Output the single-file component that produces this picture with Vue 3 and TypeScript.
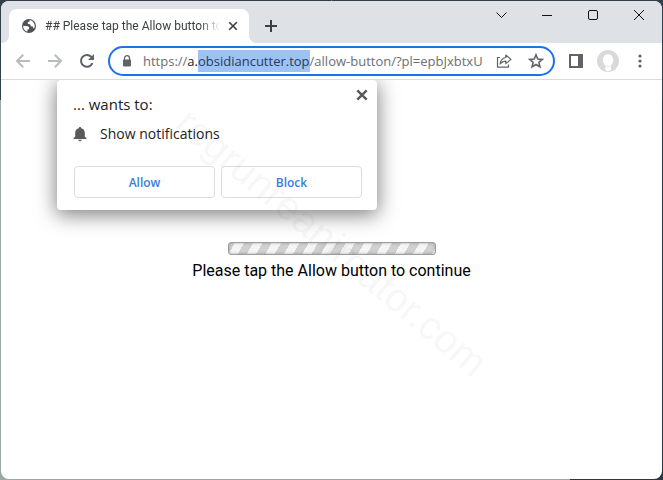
<script setup lang="ts">
import { ref } from 'vue'

const tabTitle = '## Please tap the Allow button to continue'
const url = ref('https://a.obsidiancutter.top/allow-button/?pl=epbJxbtxU')
const urlParts = [
  { text: 'https://', kind: 'muted' },
  { text: 'a.', kind: 'host' },
  { text: 'obsidiancutter.top', kind: 'selected' },
  { text: '/allow-button/?pl=epbJxbtxU', kind: 'muted' },
]
const promptOpen = ref(true)
</script>

<template>
  <div class="desktop">
    <div class="window">
      <header class="titlebar">
        <div class="tab">
          <svg class="globe" viewBox="0 0 16 16" aria-hidden="true">
            <circle cx="8" cy="8" r="7" fill="#4f5357" />
            <path d="M2.2 7.8 7 8.2 8.3 9.7 7.9 11.3 6.5 11.5 6.3 13.8A6 6 0 0 1 2.2 7.8Z" fill="#fff" />
            <path d="M8.8 2.1 8.5 3.6 6.7 4.3 7 5.9 9.2 6.2 9.8 8.3 12 8.5 12.2 10.2 13.2 10.3A5.9 5.9 0 0 0 8.8 2.1Z" fill="#fff" />
          </svg>
          <span class="tab-title">{{ tabTitle }}</span>
          <button class="tab-close" type="button" aria-label="Close tab">
            <svg viewBox="0 0 10 10" aria-hidden="true"><path d="M1.2 1.2 8.8 8.8M8.8 1.2 1.2 8.8" /></svg>
          </button>
        </div>
        <button class="new-tab" type="button" aria-label="New tab">
          <svg viewBox="0 0 12 12" aria-hidden="true"><path d="M6 0V12M0 6H12" /></svg>
        </button>
        <div class="window-controls">
          <button type="button" aria-label="Search tabs">
            <svg viewBox="0 0 12 12" aria-hidden="true"><path d="M1.5 3.5 6.5 8.5 11.5 3.5" /></svg>
          </button>
          <button type="button" aria-label="Minimize">
            <svg viewBox="0 0 12 12" aria-hidden="true"><path d="M1 6.5H11" /></svg>
          </button>
          <button type="button" aria-label="Maximize">
            <svg viewBox="0 0 12 12" aria-hidden="true"><rect x="1.5" y="1.5" width="9" height="9" rx="1.5" /></svg>
          </button>
          <button type="button" aria-label="Close window">
            <svg viewBox="0 0 12 12" aria-hidden="true"><path d="M1 1 11 11M11 1 1 11" /></svg>
          </button>
        </div>
      </header>

      <nav class="toolbar" aria-label="Browser toolbar">
        <button class="tool dim" type="button" aria-label="Back">
          <svg viewBox="0 0 16 16" aria-hidden="true"><path d="M15 8H2M8.2 1.8 2 8 8.2 14.2" /></svg>
        </button>
        <button class="tool dim" type="button" aria-label="Forward">
          <svg viewBox="0 0 16 16" aria-hidden="true"><path d="M1 8H14M7.8 1.8 14 8 7.8 14.2" /></svg>
        </button>
        <button class="tool" type="button" aria-label="Reload">
          <svg viewBox="0 0 16 16" aria-hidden="true">
            <path d="M13.4 10.1A5.9 5.9 0 1 1 12.2 3.8L13.6 5.2" />
            <path class="solid" d="M15 1V7H9Z" />
          </svg>
        </button>
        <div class="address">
          <svg class="lock" viewBox="0 0 10 12" aria-hidden="true">
            <path d="M2.5 5V3.2a2.5 2.5 0 0 1 5 0V5" fill="none" stroke="#5f6368" stroke-width="1.3" />
            <rect x="1" y="4.5" width="8" height="7" rx="1" fill="#5f6368" />
          </svg>
          <div class="url">
            <div class="url-text" aria-hidden="true">
              <span v-for="part in urlParts" :key="part.text" :class="part.kind">{{ part.text }}</span>
            </div>
            <input v-model="url" class="url-input" type="text" aria-label="Address" spellcheck="false" />
          </div>
          <button class="in-address" type="button" aria-label="Share this page">
            <svg viewBox="0 0 16 16" aria-hidden="true">
              <path d="M4 4.5H1.5V14.2H12.5V11.5" />
              <path d="M9.8 2 15 6.4 9.8 10.6V8.2C7.3 8.1 5.5 9 4 11 4.5 7.7 6.4 5.1 9.8 4.5Z" stroke-linejoin="round" />
            </svg>
          </button>
          <button class="in-address" type="button" aria-label="Bookmark this tab">
            <svg viewBox="0 0 16 16" aria-hidden="true">
              <path class="star" d="M8 1.8 9.8 6 14.3 6.4 10.9 9.4 11.9 13.8 8 11.5 4.1 13.8 5.1 9.4 1.7 6.4 6.2 6Z" />
            </svg>
          </button>
        </div>
        <button class="tool" type="button" aria-label="Side panel">
          <svg viewBox="0 0 16 16" aria-hidden="true">
            <path class="solid" fill-rule="evenodd" d="M1 1H15V15H1ZM3 3V13H10V3Z" />
          </svg>
        </button>
        <button class="profile" type="button" aria-label="Profile">
          <svg viewBox="0 0 22 22" aria-hidden="true">
            <circle cx="11" cy="11" r="11" fill="#d9d9d9" />
            <path d="M11 4.2C7.6 4.2 5.7 6.8 5.9 10 6 12.7 7.2 14.6 8.8 16L8 19.5 11 21.5 14.5 19.5 13.6 16C15.5 14.4 16.3 12.4 16.2 9.6 16.1 6.3 14.1 4.2 11 4.2Z" fill="#fff" />
            <path d="M9.4 16.2Q11.2 17.8 13 16.2" fill="none" stroke="#e3e3e3" />
          </svg>
        </button>
        <button class="tool" type="button" aria-label="Menu">
          <svg viewBox="0 0 16 16" aria-hidden="true">
            <circle class="solid" cx="8" cy="3" r="1.6" /><circle class="solid" cx="8" cy="8" r="1.6" /><circle class="solid" cx="8" cy="13" r="1.6" />
          </svg>
        </button>
      </nav>

      <main class="page">
        <section v-if="promptOpen" class="prompt" role="dialog" aria-labelledby="prompt-title">
          <div class="prompt-head">
            <h1 id="prompt-title">... wants to:</h1>
            <button class="prompt-close" type="button" aria-label="Dismiss" @click="promptOpen = false">
              <svg viewBox="0 0 12 12" aria-hidden="true"><path d="M1.3 1.3 10.7 10.7M10.7 1.3 1.3 10.7" /></svg>
            </button>
          </div>
          <p class="permission">
            <svg viewBox="0 0 14 16" aria-hidden="true">
              <path d="M7 1C7.8 1 8.1 1.5 8.1 2.2 10.4 2.7 11.8 4.5 11.8 6.7V10.6L13.5 12.2V13H.5V12.2L2.2 10.6V6.7C2.2 4.5 3.6 2.7 5.9 2.2 5.9 1.5 6.2 1 7 1ZM5.4 13.7H8.6A1.6 1.6 0 0 1 5.4 13.7Z" fill="#5a5a5a" />
            </svg>
            <span>Show notifications</span>
          </p>
          <div class="actions">
            <button type="button">Allow</button>
            <button type="button">Block</button>
          </div>
        </section>

        <div class="waiting">
          <div class="progress" role="progressbar" aria-label="Loading"></div>
          <p>Please tap the Allow button to continue</p>
        </div>
      </main>
      <div class="watermark">regrunreanimator.com</div>
    </div>
  </div>
</template>

<style>
body {
  margin: 0;
}
</style>

<style scoped>
* {
  box-sizing: border-box;
}
.desktop {
  min-height: 100vh;
  padding: 1px;
  display: flex;
  background:
    linear-gradient(#303f48, #303f48) 0 0 / 50% 100px no-repeat,
    linear-gradient(#303f48, #303f48) 100% 0 / 50% 100px no-repeat,
    linear-gradient(to right, #9aa8a7 0 86%, #273940 86%);
  font-family: "Open Sans", "Noto Sans", sans-serif;
}
.window {
  flex: 1;
  min-width: 0;
  display: flex;
  flex-direction: column;
  position: relative;
  overflow: hidden;
  border-radius: 8px;
  background: #fff;
}
button {
  border: 0;
  padding: 0;
  background: none;
  display: flex;
  align-items: center;
  justify-content: center;
  font-family: inherit;
}
svg {
  display: block;
  flex: none;
}
.titlebar {
  height: 42px;
  display: flex;
  background: #dee1e6;
}
.tab {
  position: relative;
  width: 240px;
  height: 34px;
  margin: 8px 0 0 8px;
  padding: 0 11px 0 12px;
  display: flex;
  align-items: center;
  gap: 8px;
  border-radius: 8px 8px 0 0;
  background: #fff;
}
.tab::before,
.tab::after {
  content: "";
  position: absolute;
  bottom: 0;
  width: 8px;
  height: 8px;
}
.tab::before {
  right: 100%;
  background: radial-gradient(circle at 0 0, transparent 8px, #fff 8px);
}
.tab::after {
  left: 100%;
  background: radial-gradient(circle at 100% 0, transparent 8px, #fff 8px);
}
.globe {
  width: 16px;
  height: 16px;
}
.tab-title {
  flex: 1;
  min-width: 0;
  overflow: hidden;
  white-space: nowrap;
  font-family: Roboto, sans-serif;
  font-size: 12px;
  line-height: 16px;
  color: #3c4043;
  mask-image: linear-gradient(to left, transparent, #000 20px);
}
.tab-close svg {
  width: 10px;
  height: 10px;
  fill: none;
  stroke: #3c4043;
  stroke-width: 1.6;
}
.new-tab {
  width: 28px;
  margin: 8px 0 0 8px;
}
.new-tab svg {
  width: 12px;
  height: 12px;
  stroke: #3c4043;
  stroke-width: 2;
}
.window-controls {
  margin-left: auto;
  height: 28px;
  display: flex;
}
.window-controls button {
  width: 46px;
}
.window-controls svg {
  width: 12px;
  height: 12px;
  fill: none;
  stroke: #111;
  stroke-width: 1;
}
.toolbar {
  height: 37px;
  padding: 0 14px;
  display: flex;
  align-items: center;
  gap: 16px;
  border-bottom: 1px solid #d9dbde;
}
.tool svg,
.in-address svg {
  width: 16px;
  height: 16px;
  fill: none;
  stroke: #5f6368;
  stroke-width: 2;
}
.dim svg {
  stroke: #b9bbbe;
}
.tool .solid {
  fill: #5f6368;
  stroke: none;
}
.address {
  flex: 1;
  min-width: 0;
  height: 30px;
  margin: 0 -3px;
  padding: 0 9px 0 12px;
  display: flex;
  align-items: center;
  gap: 16px;
  border: 2px solid #1a73e8;
  border-radius: 15px;
}
.lock {
  width: 10px;
  height: 12px;
  margin-right: -5px;
}
.url {
  flex: 1;
  min-width: 0;
  margin-right: -6px;
  display: grid;
  overflow: hidden;
  font-size: 13px;
  line-height: 22px;
}
.url-text,
.url-input {
  grid-area: 1 / 1;
  min-width: 0;
  width: 100%;
}
.url-text {
  overflow: hidden;
  white-space: nowrap;
}
.url-input {
  border: 0;
  padding: 0;
  outline: 0;
  background: none;
  font: inherit;
  color: transparent;
}
.muted {
  color: #6b6f74;
}
.host {
  color: #202124;
}
.selected {
  display: inline-block;
  background: #9dc2f5;
  color: #2b3c55;
}
.in-address svg {
  stroke-width: 1.2;
}
.in-address .star {
  stroke-width: 1.6;
}
.profile {
  margin: 0 -3px;
}
.profile svg {
  width: 22px;
  height: 22px;
}
.page {
  flex: 1;
  display: flex;
  flex-direction: column;
}
.prompt {
  width: 320px;
  margin-left: 56px;
  padding: 9px 15px 12px 16px;
  border-radius: 4px;
  background: #fff;
  box-shadow: 0 4px 20px 1px rgba(0, 0, 0, 0.5);
  clip-path: inset(0 -40px -40px -40px);
}
.prompt-head {
  display: flex;
  justify-content: space-between;
}
.prompt h1 {
  margin: 4px 0 0;
  font-size: 15px;
  font-weight: 400;
  line-height: 22px;
  color: #222;
}
.prompt-close {
  width: 12px;
  height: 12px;
  margin-right: -6px;
}
.prompt-close svg {
  width: 12px;
  height: 12px;
  stroke: #5a5a5a;
  stroke-width: 2.4;
}
.permission {
  margin: 8px 0 0;
  display: flex;
  align-items: center;
  gap: 13px;
  font-size: 14px;
  line-height: 22px;
  color: #222;
}
.permission svg {
  width: 14px;
  height: 16px;
}
.actions {
  margin: 21px 0 0 1px;
  display: flex;
  gap: 6px;
}
.actions button {
  flex: 1;
  height: 32px;
  border: 1px solid #dadce0;
  border-radius: 4px;
  font-size: 12px;
  font-weight: 600;
  color: #3a7de0;
}
.waiting {
  margin-top: 32px;
  display: flex;
  flex-direction: column;
  align-items: center;
}
.progress {
  width: 208px;
  height: 13px;
  border: 1px solid #9c9c9c;
  border-radius: 3px;
  background: repeating-linear-gradient(120deg, #d0d0d0 0 5px, #f5f5f5 5px 13px, #d0d0d0 13px 16px);
  box-shadow: inset 0 0 3px rgba(0, 0, 0, 0.3);
}
.waiting p {
  margin: 6px 0 0;
  font-family: Roboto, sans-serif;
  font-size: 16px;
  line-height: 20px;
  color: #000;
}
.watermark {
  position: absolute;
  top: 219px;
  left: 50%;
  transform: translateX(-50%) rotate(40deg);
  font-family: "Liberation Sans", Arial, sans-serif;
  font-size: 40px;
  line-height: 44px;
  white-space: nowrap;
  color: rgba(0, 0, 0, 0.05);
  pointer-events: none;
}
</style>
